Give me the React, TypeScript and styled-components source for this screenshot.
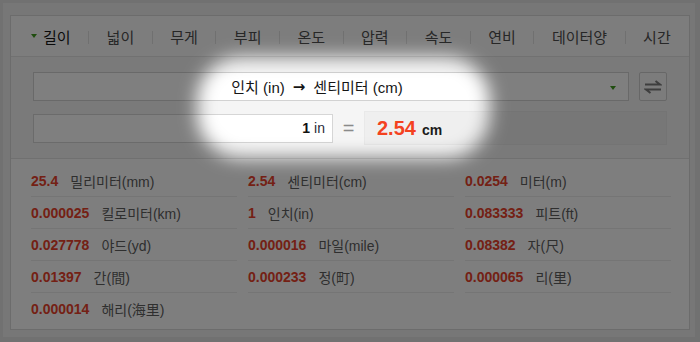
import React from 'react';
import styled, { createGlobalStyle } from 'styled-components';

const GlobalStyle = createGlobalStyle`
  html, body {
    margin: 0;
    padding: 0;
    background: #e2e2e2;
    font-family: 'Liberation Sans', 'Noto Sans CJK KR', sans-serif;
  }
`;

const Page = styled.div`
  position: relative;
  width: 700px;
  height: 342px;
  padding: 3px 5px 0 3px;
  box-sizing: border-box;
  overflow: hidden;
`;

const Frame = styled.div`
  background: #eeeeee;
  padding: 12px 5px 7px 7px;
`;

const Card = styled.div`
  background: #fdfdfd;
  border: 1px solid #d9d9d9;
`;

const TabBar = styled.div`
  display: flex;
  align-items: center;
  height: 41px;
  padding: 3px 0 0 20px;
  box-sizing: border-box;
  background: #fbfbfb;
  border-bottom: 1px solid #e3e3e3;
`;

const Tab = styled.div<{ $active?: boolean }>`
  display: flex;
  align-items: center;
  padding: ${(p) => (p.$active ? '0 17.5px 0 0' : '0 17.5px')};
  font-size: 15px;
  line-height: 18px;
  color: ${(p) => (p.$active ? '#151515' : '#4e4e4e')};
  white-space: nowrap;
`;

const Caret = styled.span`
  width: 0;
  height: 0;
  border-left: 3px solid transparent;
  border-right: 3px solid transparent;
  border-top: 4px solid #3f9a1e;
  margin-right: 6px;
  margin-top: -4px;
`;

const Divider = styled.span`
  width: 1px;
  height: 13px;
  background: #e1e1e1;
`;

const Converter = styled.div`
  background: #f5f5f5;
  padding: 15px 22px 13px 22px;
  border-bottom: 1px solid #e0e0e0;
`;

const Row = styled.div`
  display: flex;
  align-items: center;
  gap: 10px;
`;

const InputRow = styled.div`
  display: flex;
  align-items: center;
  margin-top: 10px;
`;

const Select = styled.div`
  flex: 1;
  height: 29px;
  box-sizing: border-box;
  display: flex;
  align-items: center;
  justify-content: center;
  padding-right: 28px;
  position: relative;
  background: #fff;
  border: 1px solid #d2d2d2;
  font-size: 15px;
  color: #151515;
  white-space: pre;
`;

const Arrow = styled.span`
  font-family: 'DejaVu Sans', sans-serif;
  font-weight: 700;
  font-size: 15px;
  margin: 0 8px;
`;

const SelectCaret = styled(Caret)`
  position: absolute;
  right: 12px;
  top: 13px;
  margin: 0;
`;

const SwapButton = styled.div`
  width: 28px;
  height: 29px;
  box-sizing: border-box;
  display: flex;
  align-items: center;
  justify-content: center;
  background: #f8f8f8;
  border: 1px solid #cfcfcf;
  border-radius: 2px;
`;

const Input = styled.div`
  width: 300px;
  height: 29px;
  box-sizing: border-box;
  display: flex;
  align-items: center;
  justify-content: flex-end;
  padding-right: 7px;
  background: #fff;
  border: 1px solid #d6d6d6;
  font-size: 14px;
  color: #2a2a3a;

  b {
    color: #111;
    margin-right: 4px;
  }
`;

const Equals = styled.div`
  width: 31px;
  text-align: center;
  font-size: 20px;
  color: #8a8a8a;
`;

const ResultBox = styled.div`
  flex: 1;
  height: 34px;
  box-sizing: border-box;
  display: flex;
  align-items: baseline;
  padding: 5px 0 0 12px;
  background: #efefef;
  border: 1px solid #e9e9e9;
`;

const BigValue = styled.span`
  font-size: 20px;
  font-weight: 700;
  color: #f4421f;
  margin-right: 6px;
`;

const Unit = styled.span`
  font-size: 14px;
  font-weight: 700;
  color: #1b1b1b;
`;

const Results = styled.div`
  display: grid;
  grid-template-columns: repeat(3, 206px);
  column-gap: 11px;
  padding: 6px 20px 4px 20px;
`;

const Item = styled.div`
  display: flex;
  align-items: center;
  gap: 12px;
  height: 32px;
  box-sizing: border-box;
  border-bottom: 1px solid #ebebeb;
  font-size: 14px;

  &:last-child {
    border-bottom: none;
  }
`;

const Value = styled.span`
  font-weight: 700;
  color: #e8412a;
`;

const Label = styled.span`
  color: #5e5e5e;
`;

const Overlay = styled.div`
  position: absolute;
  inset: 0;
  overflow: hidden;
  pointer-events: none;
`;

const Spot = styled.div`
  position: absolute;
  left: 197px;
  top: 57px;
  width: 293px;
  height: 101px;
  border-radius: 44px;
  box-shadow: 0 0 0 900px rgba(0, 0, 0, 0.5);
  filter: blur(9px);
`;

const tabs = ['넓이', '무게', '부피', '온도', '압력', '속도', '연비', '데이터양', '시간'];

const results = [
  ['25.4', '밀리미터(mm)'],
  ['2.54', '센티미터(cm)'],
  ['0.0254', '미터(m)'],
  ['0.000025', '킬로미터(km)'],
  ['1', '인치(in)'],
  ['0.083333', '피트(ft)'],
  ['0.027778', '야드(yd)'],
  ['0.000016', '마일(mile)'],
  ['0.08382', '자(尺)'],
  ['0.01397', '간(間)'],
  ['0.000233', '정(町)'],
  ['0.000065', '리(里)'],
  ['0.000014', '해리(海里)'],
];

function SwapIcon() {
  return (
    <svg width="18" height="14" viewBox="0 0 18 14">
      <g stroke="#7d7d7d" strokeWidth="2" fill="none">
        <path d="M1 4.5 H16 L11.5 1" />
        <path d="M17 9.5 H2 L6.5 13" />
      </g>
    </svg>
  );
}

export default function App() {
  return (
    <Page>
      <GlobalStyle />
      <Frame>
        <Card>
          <TabBar>
            <Caret />
            <Tab $active>길이</Tab>
            {tabs.map((t) => (
              <React.Fragment key={t}>
                <Divider />
                <Tab>{t}</Tab>
              </React.Fragment>
            ))}
          </TabBar>
          <Converter>
            <Row>
              <Select>
                인치 (in)<Arrow>→</Arrow>센티미터 (cm)
                <SelectCaret />
              </Select>
              <SwapButton>
                <SwapIcon />
              </SwapButton>
            </Row>
            <InputRow>
              <Input>
                <b>1</b>in
              </Input>
              <Equals>=</Equals>
              <ResultBox>
                <BigValue>2.54</BigValue>
                <Unit>cm</Unit>
              </ResultBox>
            </InputRow>
          </Converter>
          <Results>
            {results.map(([v, l]) => (
              <Item key={l}>
                <Value>{v}</Value>
                <Label>{l}</Label>
              </Item>
            ))}
          </Results>
        </Card>
      </Frame>
      <Overlay>
        <Spot />
      </Overlay>
    </Page>
  );
}
